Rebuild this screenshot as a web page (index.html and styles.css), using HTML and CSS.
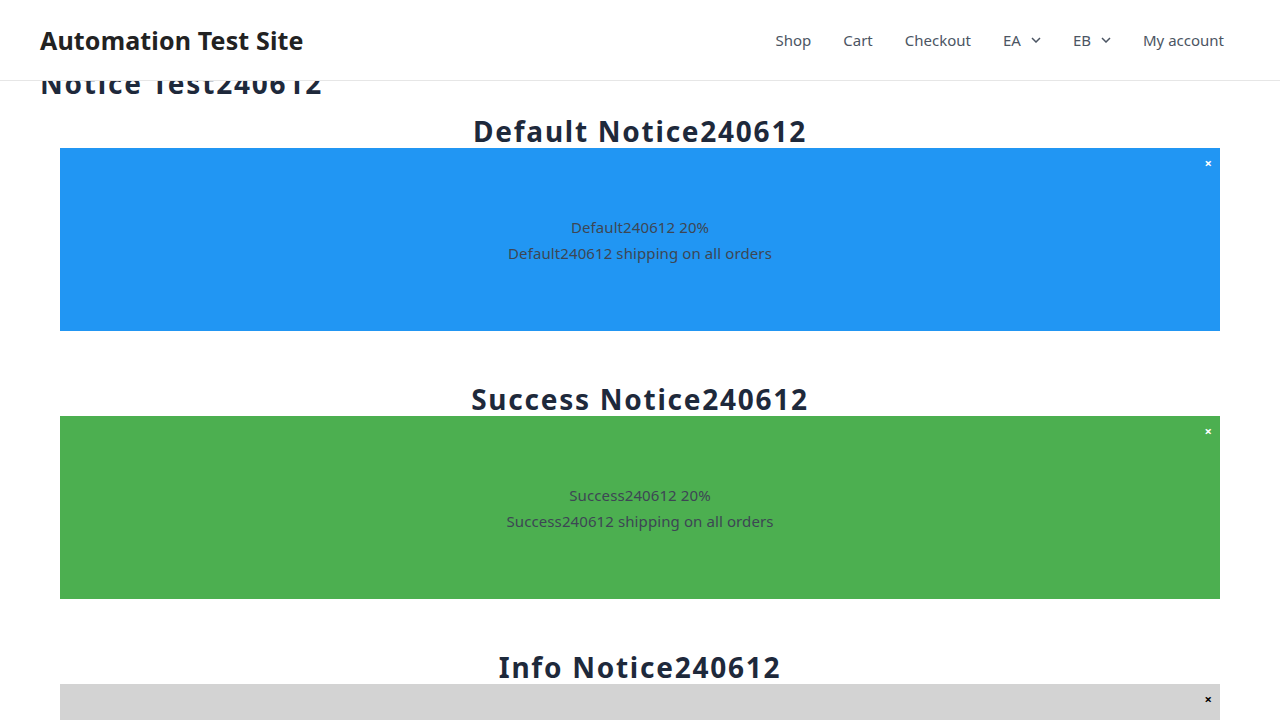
FILE: index.html
```html
<!DOCTYPE html>
<html lang="en">
<head>
<meta charset="utf-8">
<title>Notice Test240612 – Automation Test Site</title>
<link rel="stylesheet" href="styles.css">
</head>
<body>
<header class="site-header">
  <div class="site-title">Automation Test Site</div>
  <nav class="main-nav">
    <a class="nav-item" href="#">Shop</a>
    <a class="nav-item" href="#">Cart</a>
    <a class="nav-item" href="#">Checkout</a>
    <a class="nav-item" href="#">EA <svg class="chev" viewBox="0 0 10 6" width="10" height="6"><path d="M1 1l4 4 4-4" fill="none" stroke="currentColor" stroke-width="1.5"/></svg></a>
    <a class="nav-item" href="#">EB <svg class="chev" viewBox="0 0 10 6" width="10" height="6"><path d="M1 1l4 4 4-4" fill="none" stroke="currentColor" stroke-width="1.5"/></svg></a>
    <a class="nav-item" href="#">My account</a>
  </nav>
</header>
<main class="content">
  <h1 class="page-title">Notice Test240612</h1>
  <section class="notice-section first">
    <h2 class="notice-heading">Default Notice240612</h2>
    <div class="notice notice-default">
      <span class="notice-close">×</span>
      <p class="notice-text">Default240612 20%<br>Default240612 shipping on all orders</p>
    </div>
  </section>
  <section class="notice-section">
    <h2 class="notice-heading">Success Notice240612</h2>
    <div class="notice notice-success">
      <span class="notice-close">×</span>
      <p class="notice-text">Success240612 20%<br>Success240612 shipping on all orders</p>
    </div>
  </section>
  <section class="notice-section">
    <h2 class="notice-heading">Info Notice240612</h2>
    <div class="notice notice-info">
      <span class="notice-close dark">×</span>
      <p class="notice-text">Info240612 20%<br>Info240612 shipping on all orders</p>
    </div>
  </section>
</main>
</body>
</html>
```
FILE: styles.css
```css
html, body {
  margin: 0;
  padding: 0;
  background: #ffffff;
  font-family: "Noto Sans", "Open Sans", sans-serif;
  overflow: hidden;
}

.site-header {
  position: fixed;
  top: 0;
  left: 0;
  right: 0;
  height: 81px;
  box-sizing: border-box;
  background: #ffffff;
  border-bottom: 1px solid #e6e6e6;
  display: flex;
  align-items: center;
  justify-content: space-between;
  padding: 0 40px;
  z-index: 10;
}

.site-title {
  font-size: 25px;
  font-weight: 700;
  color: #222222;
  letter-spacing: 0.15px;
}

.main-nav {
  display: flex;
  align-items: center;
}

.nav-item {
  display: flex;
  align-items: center;
  gap: 10px;
  padding: 0 16px;
  font-size: 15px;
  color: #4b5563;
  text-decoration: none;
}

.nav-item:last-child {
  padding-right: 0;
  margin-right: 16px;
}

.chev {
  display: block;
}

.content {
  padding: 66px 40px 0;
}

.page-title {
  margin: 0 0 14px;
  font-size: 28px;
  line-height: 34px;
  font-weight: 700;
  color: #1e293b;
  letter-spacing: 1.8px;
}

.notice-section {
  margin: 0 20px;
}

.notice-section + .notice-section {
  margin-top: 51px;
}

.notice-heading {
  margin: 0;
  text-align: center;
  font-size: 28px;
  line-height: 34px;
  font-weight: 700;
  color: #1e293b;
  letter-spacing: 1.75px;
}

.notice {
  position: relative;
  height: 183px;
  display: flex;
  align-items: center;
  justify-content: center;
}

.notice-default { background: #2196f3; }
.notice-success { background: #4caf50; }
.notice-info { background: #d3d3d3; }

.notice-text {
  margin: 0;
  text-align: center;
  font-size: 15px;
  line-height: 26px;
  letter-spacing: 0.1px;
  color: #3d4654;
}

.notice-close {
  position: absolute;
  top: 8px;
  right: 8px;
  font-size: 13px;
  line-height: 14px;
  font-weight: 700;
  color: #ffffff;
}

.notice-close.dark {
  color: #000000;
}
```
